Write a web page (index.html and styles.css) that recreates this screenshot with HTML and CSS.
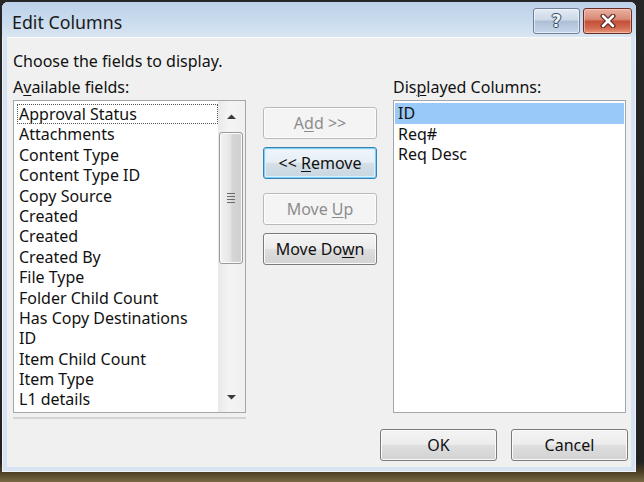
FILE: index.html
```html
<!DOCTYPE html>
<html>
<head>
<meta charset="utf-8">
<title>Edit Columns</title>
<link rel="stylesheet" href="styles.css">
</head>
<body>
<div class="window">
  <div class="titlebar">
    <span class="title">Edit Columns</span>
    <div class="caption-btns">
      <div class="cap help"><span class="qmark">?</span></div>
      <div class="cap close">
        <svg width="20" height="14" viewBox="0 0 20 14">
          <path d="M5 2 L15 12 M15 2 L5 12" stroke="#5a2a24" stroke-width="5" stroke-linecap="round"/>
          <path d="M5 2 L15 12 M15 2 L5 12" stroke="#ffffff" stroke-width="2.6" stroke-linecap="round"/>
        </svg>
      </div>
    </div>
  </div>
  <div class="client">
    <p class="intro">Choose the fields to display.</p>
    <div class="main">
      <div class="label">A<u>v</u>ailable fields:</div>
      <div class="spacer"></div>
      <div class="label">Dis<u>p</u>layed Columns:</div>

      <div class="left-cell">
        <div class="listbox">
          <ul class="items left-items">
            <li class="focus">Approval Status</li>
            <li>Attachments</li>
            <li>Content Type</li>
            <li>Content Type ID</li>
            <li>Copy Source</li>
            <li>Created</li>
            <li>Created</li>
            <li>Created By</li>
            <li>File Type</li>
            <li>Folder Child Count</li>
            <li>Has Copy Destinations</li>
            <li>ID</li>
            <li>Item Child Count</li>
            <li>Item Type</li>
            <li>L1 details</li>
          </ul>
          <div class="scrollbar">
            <div class="arrow">
              <svg width="9" height="6" viewBox="0 0 9 6"><polygon points="0,5 4.5,0.5 9,5" fill="#3a3a3a"/></svg>
            </div>
            <div class="thumb">
              <svg width="10" height="12" viewBox="0 0 10 12">
                <path d="M1 1.5H9M1 4.5H9M1 7.5H9M1 10.5H9" stroke="#6a6a6a" stroke-width="1.2"/>
              </svg>
            </div>
            <div class="track"></div>
            <div class="arrow">
              <svg width="9" height="6" viewBox="0 0 9 6"><polygon points="0,1 4.5,5.5 9,1" fill="#3a3a3a"/></svg>
            </div>
          </div>
        </div>
        <div class="under-rule"></div>
      </div>

      <div class="buttons">
        <div class="btn-group">
          <button class="btn disabled">A<u>d</u>d &gt;&gt;</button>
          <button class="btn focused">&lt;&lt; <u>R</u>emove</button>
        </div>
        <div class="btn-group">
          <button class="btn disabled">Move <u>U</u>p</button>
          <button class="btn">Move Do<u>w</u>n</button>
        </div>
      </div>

      <div class="listbox right-list">
        <ul class="items right-items">
          <li class="selected">ID</li>
          <li>Req#</li>
          <li>Req Desc</li>
        </ul>
      </div>
    </div>
    <div class="footer">
      <button class="btn wide">OK</button>
      <button class="btn wide">Cancel</button>
    </div>
  </div>
</div>
</body>
</html>
```

FILE: styles.css
```css
* { box-sizing: border-box; }

html, body {
  margin: 0;
  padding: 0;
}

body {
  width: 644px;
  height: 482px;
  overflow: hidden;
  background: linear-gradient(180deg, #262626 0px, #222222 462px, #4a3d24 472px, #7a6a44 482px);
  padding: 2px 8px 10px 2px;
  font-family: "Noto Sans", "Open Sans", "DejaVu Sans", sans-serif;
  color: #111;
}

.window {
  width: 634px;
  height: 470px;
  background: #d6e3f0;
  border-radius: 6px 6px 0 0;
  padding: 0 5px 5px 5px;
  box-shadow: inset 0 0 0 1px #eef4fa;
  display: flex;
  flex-direction: column;
}

.titlebar {
  height: 35px;
  margin: 0 -5px;
  padding: 0 0 0 10px;
  background: linear-gradient(180deg, #bcd1e8 0%, #c9dbee 55%, #d9e5f2 100%);
  border-radius: 6px 6px 0 0;
  display: flex;
  align-items: flex-start;
  justify-content: space-between;
}

.title {
  font-size: 17.8px;
  line-height: 22px;
  margin-top: 9px;
  color: #1a1a1a;
}

.caption-btns {
  display: flex;
  gap: 3px;
  margin-top: 6px;
  margin-right: 4px;
}

.cap {
  height: 26px;
  border-radius: 3px;
  display: flex;
  align-items: center;
  justify-content: center;
}

.help {
  width: 47px;
  border: 1px solid #6f8199;
  background: linear-gradient(180deg, #e3ebf5 0%, #cdd9e8 45%, #adbfd6 52%, #c7d7ea 100%);
  box-shadow: inset 0 0 0 1px rgba(255,255,255,0.55);
}

.qmark {
  font-family: "DejaVu Sans", sans-serif;
  font-weight: bold;
  font-size: 17px;
  line-height: 20px;
  color: #eef3f8;
  text-shadow: 0 0 1px #2e3f57, 1px 0 0 #3a4c66, -1px 0 0 #3a4c66, 0 1px 0 #3a4c66, 0 -1px 0 #3a4c66;
}

.close {
  width: 49px;
  border: 1px solid #6b2c22;
  background: linear-gradient(180deg, #eab1a2 0%, #d98a76 42%, #c4513a 52%, #d56b50 80%, #e59a7c 100%);
  box-shadow: inset 0 0 0 1px rgba(255,220,210,0.5);
}

.client {
  flex: 1;
  background: #f0f0f0;
  border-top: 1px solid #f7f9fb;
  padding: 10px 3px 6px 6px;
  display: flex;
  flex-direction: column;
  font-size: 16px;
}

.intro {
  margin: 0;
  line-height: 26px;
  white-space: nowrap;
}

.main {
  display: grid;
  grid-template-columns: 234px 114px 233px;
  grid-template-rows: 26px auto;
  column-gap: 16px;
}

.label {
  line-height: 26px;
  white-space: nowrap;
}

u {
  text-decoration: underline;
  text-underline-offset: 2px;
  text-decoration-thickness: 1px;
}

.left-cell {
  display: flex;
  flex-direction: column;
}

.listbox {
  width: 233px;
  height: 313px;
  background: #fff;
  border: 1px solid #a2a7ad;
  display: flex;
}

.under-rule {
  width: 233px;
  height: 2px;
  margin-top: 4px;
  background: #d4d4d4;
}

.items {
  list-style: none;
  margin: 0;
  flex: 1;
  white-space: nowrap;
  overflow: hidden;
}

.items li {
  height: 20.4px;
  line-height: 20.4px;
}

.left-items {
  padding: 3px 0 0 3px;
}

.left-items li {
  padding-left: 2px;
}

.left-items li.focus {
  outline: 1px dotted #555;
  outline-offset: -1px;
}

.right-items {
  padding: 2px 1px 0 1px;
}

.right-items li {
  padding-left: 3px;
}

.right-items li.selected {
  background: #99c9f6;
  height: 21px;
}

.scrollbar {
  width: 27px;
  display: flex;
  flex-direction: column;
  background: linear-gradient(90deg, #e9e9e9 0%, #f4f4f4 40%, #f0f0f0 100%);
  padding: 0 2px 0 1px;
}

.arrow {
  height: 31px;
  display: flex;
  align-items: center;
  justify-content: center;
}

.thumb {
  height: 132px;
  border: 1px solid #9a9a9a;
  border-radius: 3px;
  background: linear-gradient(90deg, #f3f3f3 0%, #e6e6e6 45%, #d6d6d6 55%, #cfcfcf 100%);
  box-shadow: inset 0 0 0 1px #fbfbfb;
  display: flex;
  align-items: center;
  justify-content: center;
}

.track {
  flex: 1;
}

.buttons {
  padding-top: 7px;
  display: flex;
  flex-direction: column;
  gap: 14px;
}

.btn-group {
  display: flex;
  flex-direction: column;
  gap: 8px;
}

.btn {
  height: 32px;
  width: 114px;
  font-family: inherit;
  font-size: 16px;
  color: #111;
  border: 1px solid #7a7a7a;
  border-radius: 3px;
  background: linear-gradient(180deg, #f4f4f4 0%, #ececec 48%, #dedede 52%, #d2d2d2 100%);
  box-shadow: inset 0 0 0 1px #fafafa;
  padding: 0;
  line-height: 28px;
  white-space: nowrap;
}

.btn.disabled {
  color: #8d8d8d;
  border-color: #b7babc;
  background: #f4f4f4;
  box-shadow: inset 0 0 0 1px #fdfdfd;
}

.btn.focused {
  border-color: #3c7fb1;
  background: linear-gradient(180deg, #f0f6fa 0%, #e6eef4 48%, #d4dfe7 52%, #c9d6e0 100%);
  box-shadow: inset 0 0 0 1px #7fd0f5, inset 0 0 0 2px #d8f0fb;
}

.footer {
  margin-top: 10px;
  display: flex;
  justify-content: flex-end;
  gap: 14px;
}

.btn.wide {
  width: 117px;
}
```
